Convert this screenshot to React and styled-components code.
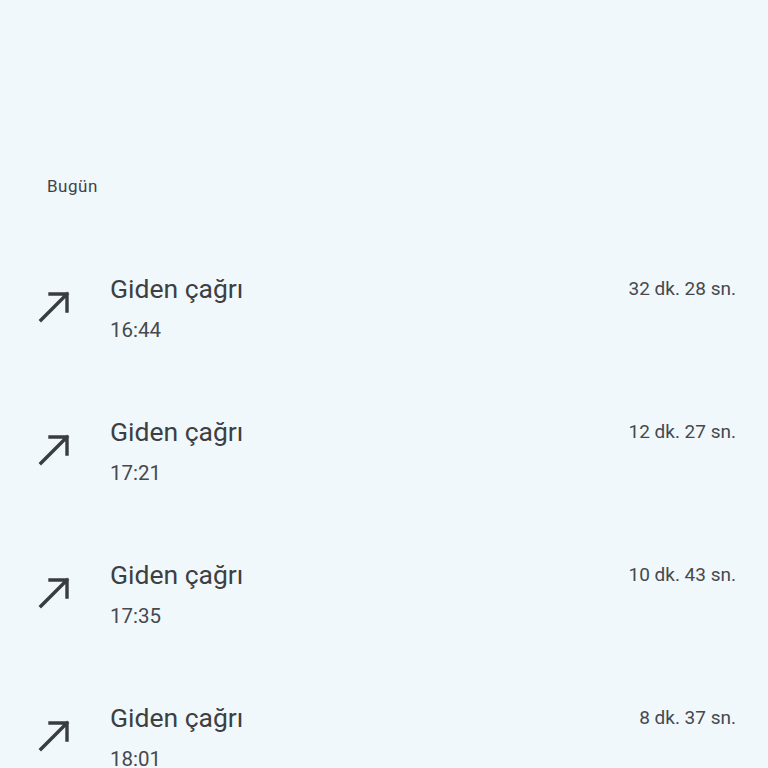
import React from "react";
import styled, { createGlobalStyle } from "styled-components";

const Global = createGlobalStyle`
  html, body { margin: 0; padding: 0; background: #f1f8fc; }
  body { font-family: Roboto, "Noto Sans", sans-serif; }
`;

const Page = styled.div`
  width: 768px;
  height: 768px;
  overflow: hidden;
  background: #f1f8fc;
  padding-top: 176px;
  box-sizing: border-box;
`;

const SectionTitle = styled.div`
  font-size: 17px;
  line-height: 20px;
  letter-spacing: 0.5px;
  color: #3f4347;
  padding-left: 47px;
  margin-bottom: 40px;
`;

const Row = styled.div`
  height: 143px;
  display: flex;
  align-items: center;
  padding-right: 32px;
`;

const IconCol = styled.div`
  width: 110px;
  flex-shrink: 0;
  display: flex;
  align-items: center;
  padding-left: 37px;
  box-sizing: border-box;
  margin-top: -4px;
`;

const Texts = styled.div`
  flex: 1;
  display: flex;
  flex-direction: column;
  gap: 10px;
`;

const TitleLine = styled.div`
  display: flex;
  justify-content: space-between;
  align-items: center;
  height: 34px;
`;

const Title = styled.div`
  font-size: 26.5px;
  color: #3c4043;
`;

const Duration = styled.div`
  font-size: 19px;
  color: #46494d;
`;

const Time = styled.div`
  font-size: 20.5px;
  line-height: 28px;
  color: #46494d;
`;

const Arrow = () => (
  <svg width="34" height="34" viewBox="0 0 34 34" fill="none">
    <path d="M4 31 L30 5 M13 5 H30 V22" stroke="#3a3d40" strokeWidth="3.4" strokeLinecap="square" />
  </svg>
);

const calls = [
  { time: "16:44", dur: "32 dk. 28 sn." },
  { time: "17:21", dur: "12 dk. 27 sn." },
  { time: "17:35", dur: "10 dk. 43 sn." },
  { time: "18:01", dur: "8 dk. 37 sn." },
];

export default function App() {
  return (
    <>
      <Global />
      <Page>
        <SectionTitle>Bugün</SectionTitle>
        {calls.map((c) => (
          <Row key={c.time}>
            <IconCol>
              <Arrow />
            </IconCol>
            <Texts>
              <TitleLine>
                <Title>Giden çağrı</Title>
                <Duration>{c.dur}</Duration>
              </TitleLine>
              <Time>{c.time}</Time>
            </Texts>
          </Row>
        ))}
      </Page>
    </>
  );
}
